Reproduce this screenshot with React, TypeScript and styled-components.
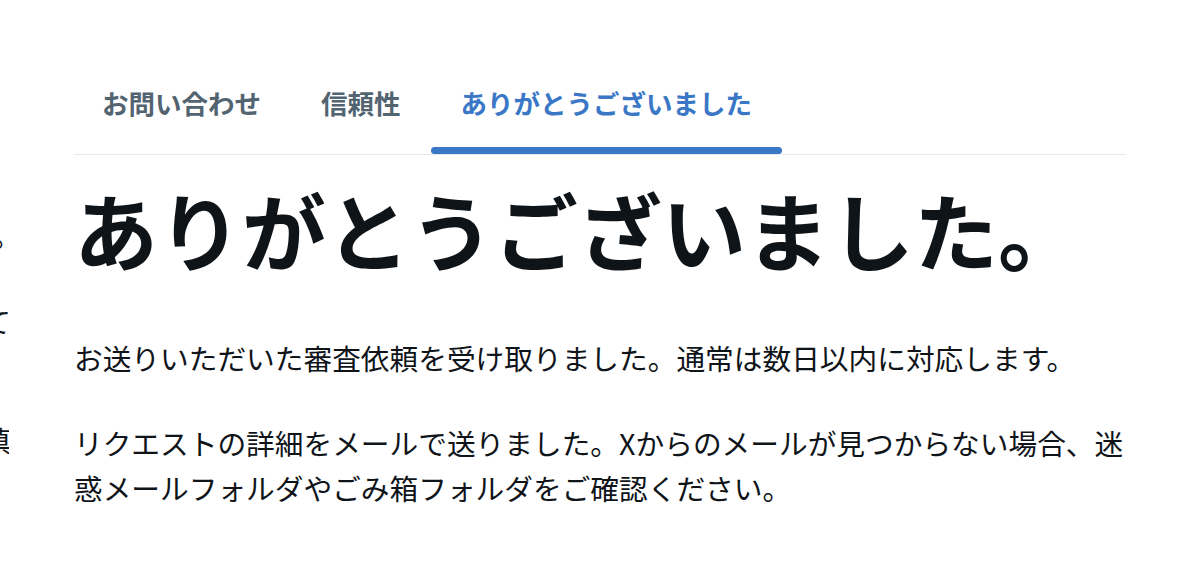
import styled, { createGlobalStyle } from "styled-components";

const GlobalStyle = createGlobalStyle`
	html, body {
		margin: 0;
		padding: 0;
		background: #ffffff;
	}

	body {
		font-family: "Noto Sans CJK JP", "Noto Sans", sans-serif;
		color: #0f1419;
	}
`;

const tabs = [
	{ id: "contact", label: "お問い合わせ" },
	{ id: "trust", label: "信頼性" },
	{ id: "thanks", label: "ありがとうございました" },
];

// ends of the lines of the panel that slid off to the left
const prevLines = [
	{ text: "。", overhang: 12, gap: 41 },
	{ text: "て", overhang: 2, gap: 74 },
	{ text: "填", overhang: 2, gap: 0 },
];

const App = () => {
	const active = "thanks";

	return (
		<>
			<GlobalStyle />
			<Page>
				<PrevPanel>
					{prevLines.map((line, i) => (
						<PrevLine key={i} $overhang={line.overhang} $gap={line.gap}>
							{line.text}
						</PrevLine>
					))}
				</PrevPanel>

				<Main>
					<TabList>
						{tabs.map((tab) => (
							<Tab key={tab.id} $active={tab.id === active}>
								{tab.label}
							</Tab>
						))}
					</TabList>

					<Heading>ありがとうございました。</Heading>

					<Text>
						お送りいただいた審査依頼を受け取りました。通常は数日以内に対応します。
					</Text>
					<Text>
						リクエストの詳細をメールで送りました。Xからのメールが見つからない場合、迷惑メールフォルダやごみ箱フォルダをご確認ください。
					</Text>
				</Main>
			</Page>
		</>
	);
};

const Page = styled.div`
	display: flex;
	width: 1200px;
	height: 570px;
	overflow: hidden;
`;

const PrevPanel = styled.div`
	display: flex;
	flex-direction: column;
	align-items: flex-end;
	width: 9px;
	min-width: 9px;
	padding-top: 212px;
	overflow: hidden;
`;

const PrevLine = styled.span<{ $overhang: number; $gap: number }>`
	display: block;
	font-size: 28.7px;
	line-height: 45px;
	white-space: nowrap;
	margin-left: -30px;
	margin-right: ${({ $overhang }) => -$overhang}px;
	margin-bottom: ${({ $gap }) => $gap}px;
`;

const Main = styled.main`
	display: flex;
	flex-direction: column;
	width: 1052px;
	margin-left: 65px;
`;

const TabList = styled.nav`
	display: flex;
	padding-top: 85px;
	border-bottom: 1px solid #e6e8ea;
`;

const Tab = styled.div<{ $active: boolean }>`
	position: relative;
	padding: 0 30px 33px;
	font-size: 26.5px;
	line-height: 36px;
	font-weight: 700;
	color: ${({ $active }) => ($active ? "#3a77c6" : "#536471")};
	white-space: nowrap;

	&:first-child {
		padding-left: 28px;
	}

	&::after {
		content: "";
		display: ${({ $active }) => ($active ? "block" : "none")};
		position: absolute;
		left: 0;
		right: 0;
		bottom: 0;
		height: 7px;
		border-radius: 4px;
		background: #3a77c6;
	}
`;

const Heading = styled.h1`
	margin: 24px 0 0;
	font-size: 84px;
	line-height: 100px;
	font-weight: 700;
	color: #0f1419;
	white-space: nowrap;
`;

const Text = styled.p`
	margin: 56px 0 0;
	font-size: 28.7px;
	line-height: 45px;
	font-weight: 400;
	color: #0f1419;

	& + & {
		margin-top: 40px;
	}
`;

export default App;
